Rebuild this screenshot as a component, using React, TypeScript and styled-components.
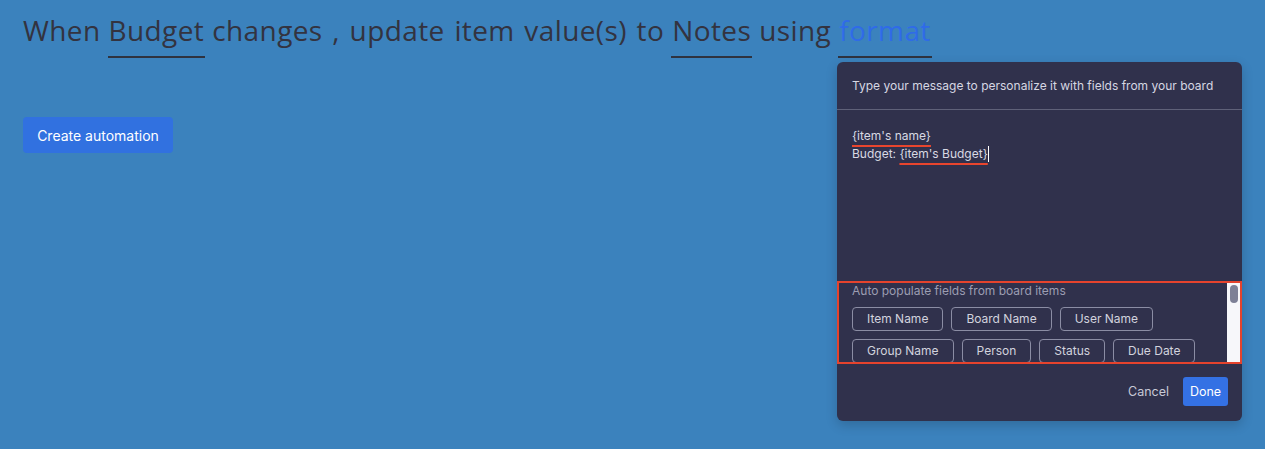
import React from "react";
import styled, { createGlobalStyle } from "styled-components";

const Global = createGlobalStyle`
  html, body { margin: 0; padding: 0; }
  body {
    background: #3b82bd;
    font-family: "Inter", "Roboto", sans-serif;
    width: 1265px;
    height: 449px;
    overflow: hidden;
  }
`;

const Page = styled.div`
  position: relative;
  width: 1265px;
  height: 449px;
  padding: 10px 23px 0;
  box-sizing: border-box;
  display: flex;
  flex-direction: column;
  align-items: flex-start;
`;

const Headline = styled.div`
  font-family: "Open Sans", sans-serif;
  font-weight: 400;
  font-size: 28px;
  letter-spacing: 0.4px;
  word-spacing: 2px;
  line-height: 40px;
  color: #333340;
  white-space: pre;
  display: flex;
  align-items: flex-start;
  gap: 7px;
`;

const Word = styled.span``;

const Select = styled.span<{ $accent?: boolean }>`
  display: inline-block;
  padding: 0 1px 6px;
  border-bottom: 2px solid #2f3340;
  color: ${(p) => (p.$accent ? "#2f6be8" : "#333340")};
`;

const CreateButton = styled.button`
  margin-top: 59px;
  width: 150px;
  height: 36px;
  border: none;
  border-radius: 4px;
  background: #3171e0;
  color: #ffffff;
  font-family: "Inter", "Roboto", sans-serif;
  font-size: 14px;
  padding: 0;
`;

const Panel = styled.div`
  position: absolute;
  left: 837px;
  top: 62px;
  width: 405px;
  height: 359px;
  background: #30314c;
  border-radius: 6px;
  box-shadow: 0 4px 12px rgba(0, 0, 0, 0.18);
  display: flex;
  flex-direction: column;
  overflow: hidden;
  font-family: "Inter", "Roboto", sans-serif;
`;

const PanelHeader = styled.div`
  height: 47px;
  flex: none;
  padding: 0 15px;
  display: flex;
  align-items: center;
  font-size: 12px;
  color: #d6d7e2;
  border-bottom: 1px solid #5f6178;
  white-space: nowrap;
`;

const Editor = styled.div`
  height: 171px;
  flex: none;
  box-sizing: border-box;
  padding: 17px 15px 0;
  font-size: 12px;
  line-height: 18px;
  color: #d8d9e3;
`;

const Line = styled.div`
  display: flex;
  align-items: center;
  white-space: pre;
`;

const Token = styled.span`
  text-decoration: underline;
  text-decoration-color: #e8452e;
  text-decoration-thickness: 2px;
  text-underline-offset: 5px;
`;

const Caret = styled.span`
  display: inline-block;
  width: 1px;
  height: 16px;
  background: #ffffff;
`;

const FieldBox = styled.div`
  height: 83px;
  flex: none;
  box-sizing: border-box;
  border: 2px solid #e5432d;
  display: flex;
  overflow: hidden;
`;

const FieldContent = styled.div`
  flex: 1;
  padding: 0 13px 0;
  overflow: hidden;
`;

const FieldLabel = styled.div`
  font-size: 12px;
  line-height: 16px;
  color: #9c9db2;
  margin-bottom: 8px;
`;

const Chips = styled.div`
  display: flex;
  flex-wrap: wrap;
  gap: 8px;
`;

const Chip = styled.div`
  height: 24px;
  box-sizing: border-box;
  padding: 0 14px;
  border: 1px solid #8b8da4;
  border-radius: 4px;
  font-size: 12px;
  line-height: 22px;
  color: #d2d3de;
`;

const ScrollTrack = styled.div`
  width: 13px;
  flex: none;
  background: #f7f7fa;
  display: flex;
  justify-content: center;
  padding-top: 2px;
`;

const ScrollThumb = styled.div`
  width: 8px;
  height: 18px;
  border-radius: 4px;
  background: #7e8096;
`;

const Footer = styled.div`
  flex: 1;
  display: flex;
  align-items: center;
  justify-content: flex-end;
  gap: 14px;
  padding: 0 14px 2px;
`;

const CancelButton = styled.button`
  background: none;
  border: none;
  color: #c8c9d6;
  font-family: "Inter", "Roboto", sans-serif;
  font-size: 12.5px;
  padding: 0;
`;

const DoneButton = styled.button`
  width: 45px;
  height: 29px;
  border: none;
  border-radius: 3px;
  background: #3471e4;
  color: #ffffff;
  font-family: "Inter", "Roboto", sans-serif;
  font-size: 12.5px;
  padding: 0;
`;

const row1 = ["Item Name", "Board Name", "User Name"];
const row2 = ["Group Name", "Person", "Status", "Due Date"];

export default function App() {
  return (
    <>
      <Global />
      <Page>
        <Headline>
          <Word>When</Word>
          <Select>Budget</Select>
          <Word>changes , update item value(s) to</Word>
          <Select>Notes</Select>
          <Word>using</Word>
          <Select $accent>format</Select>
        </Headline>
        <CreateButton>Create automation</CreateButton>
        <Panel>
          <PanelHeader>Type your message to personalize it with fields from your board</PanelHeader>
          <Editor>
            <Line>
              <Token>{"{item's name}"}</Token>
            </Line>
            <Line>
              {"Budget: "}
              <Token>{"{item's Budget}"}</Token>
              <Caret />
            </Line>
          </Editor>
          <FieldBox>
            <FieldContent>
              <FieldLabel>Auto populate fields from board items</FieldLabel>
              <Chips>
                {[...row1, ...row2].map((c) => (
                  <Chip key={c}>{c}</Chip>
                ))}
              </Chips>
            </FieldContent>
            <ScrollTrack>
              <ScrollThumb />
            </ScrollTrack>
          </FieldBox>
          <Footer>
            <CancelButton>Cancel</CancelButton>
            <DoneButton>Done</DoneButton>
          </Footer>
        </Panel>
      </Page>
    </>
  );
}
